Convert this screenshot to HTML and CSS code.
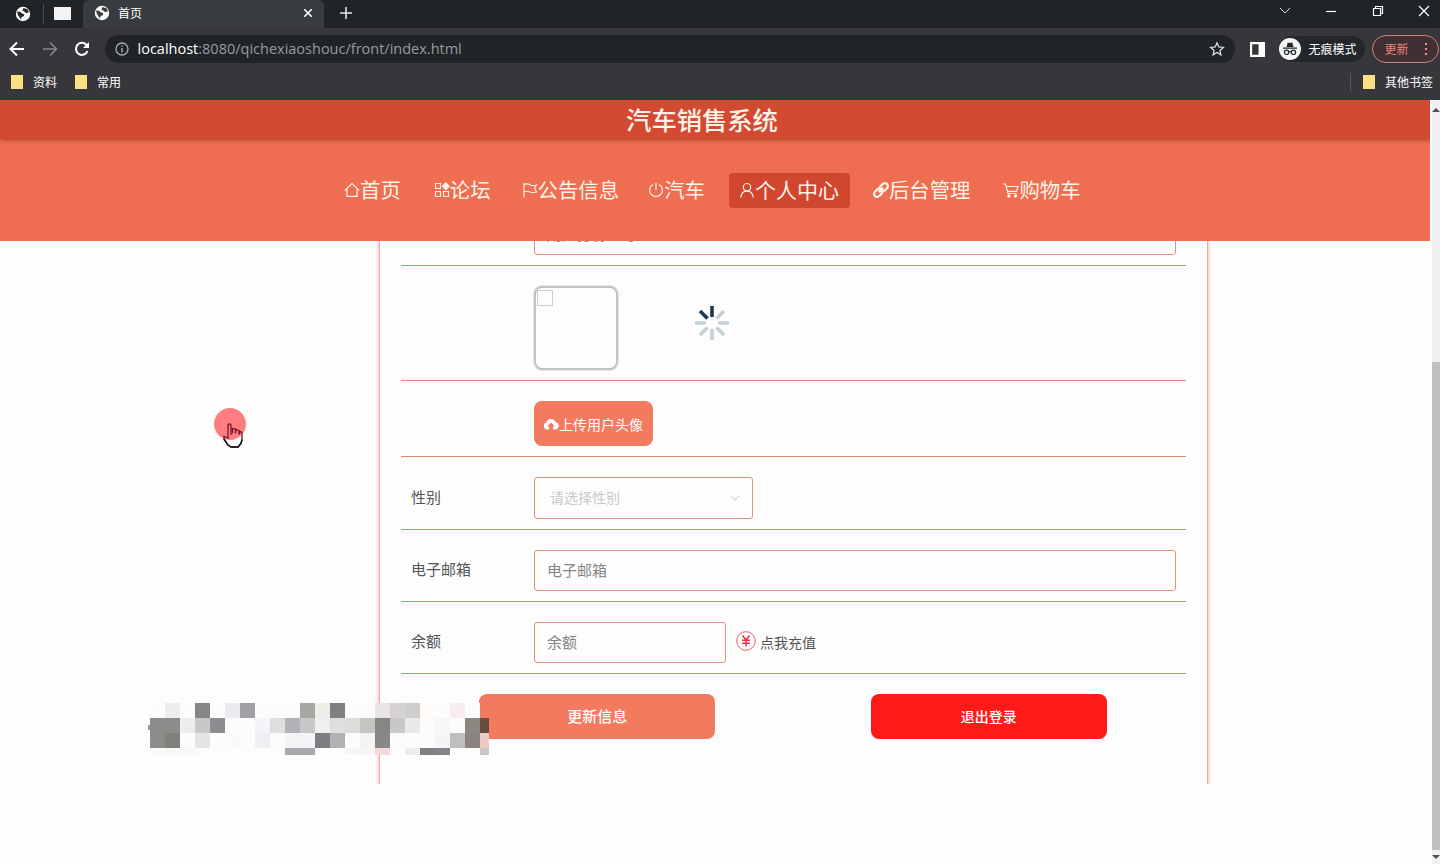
FILE: index.html
```html
<!DOCTYPE html>
<html lang="zh-CN">
<head>
  <meta charset="UTF-8">
  <title>首页</title>
  <link rel="stylesheet" href="styles.css">
</head>
<body>

<!-- browser window -->
<div class="browser">
  <div class="tabs">
    <svg class="globe pinned" viewBox="0 0 16 16"><circle cx="8" cy="8" r="7.2" fill="#fff"/><path d="M2 5.5l3 .3 2 1.800 2.300.6-.4 2-2 .6-1 2.600-1.500-2.400L3 9.200zM8.500 2l4 1.200 1.500 3.300-3.300.6-1.600-1.800-1.800-.5z" fill="#26292b"/></svg>
    <span class="tab-line"></span>
    <span class="blank-icon"></span>
    <div class="tab">
      <svg class="globe" viewBox="0 0 16 16"><circle cx="8" cy="8" r="7.200" fill="#fff"/><path d="M2 5.500l3 .3 2 1.800 2.300.6-.4 2-2 .6-1 2.600-1.500-2.400L3 9.200zM8.500 2l4 1.200 1.500 3.300-3.300.6-1.600-1.800-1.800-.5z" fill="#393c3e"/></svg>
      <span class="tab-title">首页</span>
      <svg class="tab-close" viewBox="0 0 10 10"><path d="M1.300 1.300l7.400 7.400M8.700 1.300L1.300 8.700" stroke="#fff" stroke-width="1.600"/></svg>
    </div>
    <svg class="tab-add" viewBox="0 0 12 12"><path d="M6 0v12M0 6h12" stroke="#e4e6e8" stroke-width="1.600"/></svg>
    <div class="win">
      <svg viewBox="0 0 12 12"><path d="M1 3l5 5 5-5" fill="none" stroke="#ddd"/></svg>
      <svg viewBox="0 0 12 12"><path d="M1 6.500h10" stroke="#fff" stroke-width="1.200"/></svg>
      <svg viewBox="0 0 12 12"><path d="M1.500 3.500h7v7h-7zM3.500 3.500v-2h7v7h-2" fill="none" stroke="#fff" stroke-width="1.200"/></svg>
      <svg viewBox="0 0 12 12"><path d="M1 1l10 10M11 1L1 11" stroke="#fff" stroke-width="1.200"/></svg>
    </div>
  </div>

  <div class="toolbar">
    <svg class="tool" viewBox="0 0 16 16"><path d="M15 8H2M8 1.500L1.500 8 8 14.500" fill="none" stroke="#fff" stroke-width="2"/></svg>
    <svg class="tool" viewBox="0 0 16 16"><path d="M1 8h13M8 1.500L14.500 8 8 14.500" fill="none" stroke="#85878a" stroke-width="1.600"/></svg>
    <svg class="tool" viewBox="0 0 16 16"><path d="M13.500 10.200A6 6 0 1 1 12.300 3.700L14 5.500" fill="none" stroke="#fff" stroke-width="2"/><path d="M15 1v6H9z" fill="#fff"/></svg>
    <div class="address">
      <svg class="info" viewBox="0 0 14 14"><circle cx="7" cy="7" r="6" fill="none" stroke="#aaadb0" stroke-width="1.300"/><path d="M7 6v4.500M7 3.300v1.500" stroke="#aaadb0" stroke-width="1.400"/></svg>
      <span class="url"><b>localhost</b>:8080/qichexiaoshouc/front/index.html</span>
      <svg class="star" viewBox="0 0 16 16"><path d="M8 1.800l1.800 4.200 4.500.4-3.400 3 1 4.400L8 11.500l-3.900 2.300 1-4.400-3.400-3 4.500-.4z" fill="none" stroke="#dadce0" stroke-width="1.300"/></svg>
    </div>
    <svg class="panel" viewBox="0 0 14 14"><path d="M0 0h14v14H0zM2 2v10h6V2z" fill="#fff" fill-rule="evenodd"/></svg>
    <div class="incognito">
      <svg viewBox="0 0 22 22"><circle cx="11" cy="11" r="11" fill="#f4f5f6"/><path d="M7.500 9l1.200-4.500 2.300.6 2.300-.6L14.500 9zM4 9.500h14v1.200H4z" fill="#222629"/><circle cx="7.600" cy="14.300" r="2.200" fill="none" stroke="#222629" stroke-width="1.200"/><circle cx="14.400" cy="14.300" r="2.200" fill="none" stroke="#222629" stroke-width="1.200"/><path d="M9.800 14q1.200-.8 2.400 0" fill="none" stroke="#222629"/></svg>
      无痕模式
    </div>
    <div class="update">更新<span class="dots"><i></i><i></i><i></i></span></div>
  </div>

  <div class="bookmarks">
    <span class="folder"></span><span class="mark">资料</span>
    <span class="folder"></span><span class="mark">常用</span>
    <span class="mark-line"></span>
    <span class="folder"></span><span class="mark last">其他书签</span>
  </div>
</div>

<div class="window">
  <div class="page">
    <div class="title">汽车销售系统</div>
    <div class="nav">
      <a class="home"><svg viewBox="0 0 16 16"><path d="M.8 8.500L8 1.500l7.200 7M3 7v7.300h10V7"/></svg>首页</a>
      <a class="forum"><svg viewBox="0 0 16 16"><path d="M1.500 1.500h5v5h-5zM1.500 9.500h5v5h-5zM9.500 9.500h5v5h-5z"/><path class="solid" d="M11.800.8L15.200 4.200l-3.400 3.400-3.400-3.400z"/></svg>论坛</a>
      <a class="notice"><svg viewBox="0 0 16 16"><path d="M2 1v14.500M2 2.500q3-1.500 6 .3t6.500.2L12.500 6l2 4q-3.500 1.500-6.500 0T2 10"/></svg>公告信息</a>
      <a class="car"><svg viewBox="0 0 16 16"><path d="M5 2.500a6.400 6.400 0 1 0 6 0M8 1v7"/></svg>汽车</a>
      <a class="active"><svg viewBox="0 0 16 16"><circle cx="8" cy="5.200" r="3.700"/><path d="M1.800 15.500c.3-4 2.800-6.300 6.200-6.300s5.900 2.300 6.200 6.300"/></svg>个人中心</a>
      <a class="admin"><svg viewBox="0 0 16 16"><g transform="rotate(-45 8 8)" stroke-width="2.300"><rect x="-.5" y="5" width="9" height="6" rx="3"/><rect x="7.500" y="5" width="9" height="6" rx="3"/><path d="M5 8h6"/></g></svg>后台管理</a>
      <a class="cart"><svg viewBox="0 0 16 16"><path d="M0 2h2.500L5 11.500h8.500M3.300 4.500H15l-1.500 4.800H4.500"/><circle class="solid" cx="6" cy="14" r="1.100"/><circle class="solid" cx="12.500" cy="14" r="1.100"/></svg>购物车</a>
    </div>

    <div class="content">
      <div class="card">
        <div class="row">
          <label></label>
          <div class="input">用户身份证号</div>
        </div>
        <div class="row">
          <label></label>
          <div class="avatar"><span></span></div>
          <svg class="loading" viewBox="-17 -17 34 34">
            <g stroke="#c3d0d8" stroke-width="3.600">
              <path d="M6 0h11M-6 0h-11M0 6v11M4.500 4.500l7.500 7.500M-4.500 4.500l-7.500 7.500M4.500-4.500l7.500-7.500"/>
              <path d="M0-6v-11M-4.500-4.500l-7.500-7.500" stroke="#1c3a54"/>
            </g>
          </svg>
        </div>
        <div class="row">
          <label></label>
          <div class="upload"><svg viewBox="0 0 16 14"><path d="M4 12.500a3.600 3.600 0 0 1-.6-7A4.800 4.800 0 0 1 12.500 5a3.800 3.800 0 0 1 0 7.500H10V9.500h2L8 5.500 4 9.500h2v3z" fill="#fff"/></svg>上传用户头像</div>
        </div>
        <div class="row">
          <label>性别</label>
          <div class="input select">请选择性别<svg viewBox="0 0 12 8"><path d="M1.500 1.500L6 6l4.500-4.500" fill="none" stroke="#c8cacc"/></svg></div>
        </div>
        <div class="row">
          <label>电子邮箱</label>
          <div class="input">电子邮箱</div>
        </div>
        <div class="row">
          <label>余额</label>
          <div class="input money">余额</div>
          <svg class="yen" viewBox="0 0 20 20"><circle cx="10" cy="10" r="9.300" fill="none" stroke="#e2606c"/><path d="M6.500 4.500L10 9l3.500-4.500M10 9v6.500M6 9.300h8M6 12.200h8" fill="none" stroke="#e8303c" stroke-width="1.400"/></svg>
          <span class="recharge">点我充值</span>
        </div>
        <div class="buttons">
          <div><button class="save">更新信息</button></div>
          <div><button class="logout">退出登录</button></div>
        </div>
      </div>
    </div>
  </div>

  <div class="scrollbar"><span class="up"></span><span class="thumb"></span><span class="down"></span></div>
</div>

<svg class="mosaic" viewBox="0 0 342 52" shape-rendering="crispEdges">
  <path fill="#fdfcfd" d="M3 0h330v52H3z"/>
  <path fill="#999" d="M1 22h2v5H1z"/>
  <g id="cells"></g>
</svg>

<!-- mouse pointer -->
<svg class="pointer" viewBox="0 0 36 44">
  <circle cx="17" cy="18" r="16" fill="#ff7f80"/>
  <path d="M12 33l5 6h7l3-6.500c-4 3-10 3-15 .5z" fill="#fff"/>
  <path d="M18 29V19q-1.500-2-3 0v13l-4-1.500v3l4 5.500 3 2h7l3-3.500 1-4v-7l-2-1-1 3v-4l-3-1-.5 4v-4.500l-3-.5v5" fill="none" stroke="#7c1526" stroke-width="1.300"/>
  <path d="M11 33l4 6 3 2h7l3-3.500 1-4" fill="none" stroke="#181018" stroke-width="1.500"/>
</svg>

<script>
  // one entry per row: column -> colour
  const rows = [
    {1:'#efeeee',3:'#868686',5:'#ebeaee',6:'#a2a0a4',10:'#a8a8a2',11:'#eeeee8',12:'#807e80',15:'#ebe5e4',16:'#d5d2d4',17:'#d0cecd',18:'#fffaf8',20:'#f8ecee'},
    {0:'#8c8c8a',1:'#8c8c8a',2:'#ededeb',3:'#c8c8c8',4:'#8e8c90',7:'#f5f4f8',8:'#dddee0',9:'#b2b2b6',10:'#c8c8c8',11:'#efeef0',12:'#dededf',13:'#dcdcda',14:'#c2c5c0',15:'#868684',16:'#c8c8ca',17:'#e9e9eb',19:'#f7f7f7',21:'#8a8880',22:'#664c3c'},
    {0:'#8c8c8a',1:'#80807d',3:'#e4e4e3',5:'#faf9fb',7:'#f0eef2',9:'#f4f3f6',10:'#f4f3f6',11:'#7e7c80',12:'#b2b1b5',14:'#f4f4f4',15:'#8a8886',19:'#f5f4f6',20:'#c0bfbf',21:'#8c8280',22:'#eccac6'},
    {0:'#f8f8f6',1:'#f8f8f6',2:'#f8f8f6',9:'#a9a8ac',10:'#a9a8ac',13:'#f7f6f6',14:'#f7f6f6',15:'#f5d8da',17:'#ededef',18:'#808082',19:'#848488',22:'#c9c6ca'}
  ];
  let html = '';
  rows.forEach((row, y) => {
    for (const x in row) {
      html += `<rect x="${3 + x * 15}" y="${y * 15}" width="${x == 22 ? 9 : 15}" height="${y == 3 ? 7 : 15}" fill="${row[x]}"/>`;
    }
  });
  document.getElementById('cells').innerHTML = html;
</script>

</body>
</html>
```
FILE: styles.css
```css
* {
  box-sizing: border-box;
}

body {
  margin: 0;
  width: 1440px;
  height: 864px;
  overflow: hidden;
  position: relative;
  font-family: "Open Sans", "Noto Sans CJK SC", sans-serif;
  background: #fefdfe;
}

svg {
  flex: none;
}

/* browser */
.browser {
  height: 100px;
  background: #37373b;
  color: #fff;
  font-size: 12px;
}

.tabs {
  display: flex;
  align-items: center;
  height: 28px;
  padding: 0 0 1px 15px;
  background: #202427;
}

.globe {
  width: 16px;
  height: 16px;
}

.tab-line {
  width: 1px;
  height: 20px;
  margin: 0 10px 0 12px;
  background: #4a4d50;
}

.blank-icon {
  width: 17px;
  height: 13px;
  background: #f3f3f3;
}

.tab {
  display: flex;
  align-items: center;
  width: 241px;
  height: 28px;
  margin-left: 12px;
  padding: 0 11px 2px 11px;
  border-radius: 6px 6px 0 0;
  background: #393c3e;
}

.tab-title {
  flex: 1;
  margin-left: 8px;
}

.tab-close {
  width: 10px;
  height: 10px;
}

.tab-add {
  width: 12px;
  height: 12px;
  margin: 0 0 2px 16px;
}

.win {
  display: flex;
  gap: 34.500px;
  margin-left: auto;
  padding: 0 10px 6px 0;
}

.win svg {
  width: 12px;
  height: 12px;
}

.toolbar {
  display: flex;
  align-items: center;
  height: 42px;
  padding-left: 9px;
}

.tool {
  width: 16px;
  height: 16px;
  margin-right: 16.500px;
}

.address {
  display: flex;
  align-items: center;
  width: 1130px;
  height: 28px;
  margin-left: -2px;
  padding: 0 10px;
  border-radius: 14px;
  background: #202427;
}

.info {
  width: 14px;
  height: 14px;
}

.url {
  flex: 1;
  margin-left: 9px;
  padding-bottom: 2px;
  font-size: 14.500px;
  color: #989b9e;
}

.url b {
  font-weight: 400;
  color: #fff;
}

.star {
  width: 16px;
  height: 16px;
}

.panel {
  width: 15px;
  height: 15px;
  margin-left: 15px;
}

.incognito {
  display: flex;
  align-items: center;
  gap: 8px;
  width: 86px;
  height: 26px;
  margin-left: 14px;
  white-space: nowrap;
  border-radius: 13px;
  background: #24272a;
}

.incognito svg {
  width: 22px;
  height: 22px;
}

.update {
  display: flex;
  align-items: center;
  width: 67px;
  height: 28px;
  margin-left: 7px;
  padding: 0 11px 0 12px;
  border: 1px solid #cf7f80;
  border-radius: 14px;
  background: #402f33;
  color: #f0817d;
}

.dots {
  display: grid;
  gap: 3px;
  margin-left: auto;
}

.dots i {
  width: 2px;
  height: 2px;
  background: #f0908b;
}

.bookmarks {
  display: flex;
  align-items: center;
  height: 24px;
  padding: 0 7px 0 11px;
}

.folder {
  width: 12px;
  height: 14px;
  background: #fbe083;
}

.mark {
  margin: 0 18px 0 10px;
}

.mark-line {
  width: 1px;
  height: 18px;
  margin: 0 12px 0 auto;
  background: #5c5c60;
}

.mark.last {
  margin-right: 0;
}

/* site */
.window {
  display: flex;
  height: 764px;
}

.page {
  width: 1430px;
  height: 764px;
  overflow: hidden;
  color: #fff3e8;
}

.title {
  position: relative;
  height: 39px;
  padding-right: 26px;
  background: #d24a32;
  box-shadow: 0 1px 4px rgba(140, 50, 20, 0.7);
  font-size: 25.300px;
  font-weight: 500;
  line-height: 40px;
  text-align: center;
}

.nav {
  display: flex;
  align-items: center;
  height: 102px;
  padding-left: 334px;
  background: #ef6d51;
  font-size: 20.400px;
}

.nav a {
  display: flex;
  align-items: center;
  height: 35px;
  margin-right: 13px;
  padding: 0 10px 2px;
  white-space: nowrap;
}

.nav svg {
  width: 16px;
  height: 16px;
  margin-top: 2px;
  fill: none;
  stroke: #fff3e8;
  stroke-width: 1.200;
}

.nav .solid {
  fill: #fff3e8;
}

.nav .forum {
  margin-right: 11px;
}

.nav .notice {
  margin-right: 9px;
}

.nav .car {
  margin-right: 14px;
}

.nav .active {
  width: 121px;
  font-size: 21px;
  border-radius: 4px;
  background: #d1462e;
}

.content {
  height: 623px;
  overflow: hidden;
}

.card {
  width: 829px;
  height: 592px;
  margin: -46.800px 0 0 379px;
  padding: 0 21px;
  border: solid #e6aaa5;
  border-width: 0 1px;
  box-shadow: 0 0 4px rgba(240, 110, 90, 0.6);
  clip-path: inset(0 -6px 2px);
  font-size: 15px;
  color: #555;
}

.row {
  display: flex;
  align-items: center;
  padding: 20px 10px 10px;
  border-bottom: 1px solid #e28770;
}

.row label {
  width: 123px;
  padding-bottom: 3px;
}

.input {
  flex: 1;
  height: 41.200px;
  padding: 0 12px;
  border: 1px solid #e28f7c;
  border-radius: 3px;
  line-height: 39px;
  color: #858585;
}

.select {
  display: flex;
  align-items: center;
  justify-content: space-between;
  flex: none;
  width: 219px;
  padding: 0 11px 0 15px;
  font-size: 14px;
  color: #c6c8cc;
}

.select svg {
  width: 12px;
  height: 8px;
}

.money {
  flex: none;
  width: 192px;
}

.yen {
  width: 20px;
  height: 20px;
  margin: -3px 4px 0 10px;
}

.recharge {
  font-size: 14px;
}

.avatar {
  width: 84px;
  height: 84px;
  padding: 3px;
  border: 2px solid #c4c2c6;
  border-radius: 8px;
  box-shadow: 0 0 2px #bbb;
}

.avatar span {
  display: block;
  width: 16px;
  height: 16px;
  margin: -1px 0 0 -2px;
  border: 1px solid #ccc;
}

.loading {
  width: 34px;
  height: 34px;
  margin: -11px 0 0 77px;
}

.upload {
  display: flex;
  align-items: center;
  width: 119px;
  height: 45px;
  padding-left: 9px;
  white-space: nowrap;
  border-radius: 8px;
  background: #f27a5f;
  font-size: 14px;
  color: #fff;
}

.upload svg {
  width: 16px;
  height: 14px;
}

.buttons {
  display: flex;
  padding-top: 20px;
}

.buttons div {
  flex: 1;
  text-align: center;
}

button {
  width: 236px;
  height: 45px;
  padding-bottom: 2px;
  border: none;
  border-radius: 8px;
  font-family: inherit;
  font-size: 15px;
  font-weight: 500;
  color: #fff;
}

.save {
  background: #f27b5f;
}

.logout {
  margin-right: 2px;
  background: #ff1a1a;
  font-size: 14px;
}

.scrollbar {
  display: flex;
  flex-direction: column;
  align-items: flex-end;
  width: 10px;
  background: #f1f0f1;
  border-left: 2px solid #fff;
}

.up {
  height: 262px;
}

.up::before,
.down::before {
  content: "";
  display: block;
  margin-top: 8px;
  border: 4px solid transparent;
  border-top: 0;
  border-bottom-color: #505050;
}

.thumb {
  width: 8px;
  height: 488px;
  background: #c1c0c2;
}

.down::before {
  margin-top: 5px;
  border-top: 4px solid #505050;
  border-bottom: 0;
}

/* things lying over the page */
.mosaic {
  position: absolute;
  left: 147px;
  top: 703px;
  width: 342px;
  height: 52px;
}

.pointer {
  position: absolute;
  left: 213px;
  top: 406px;
  width: 36px;
  height: 44px;
}
```
